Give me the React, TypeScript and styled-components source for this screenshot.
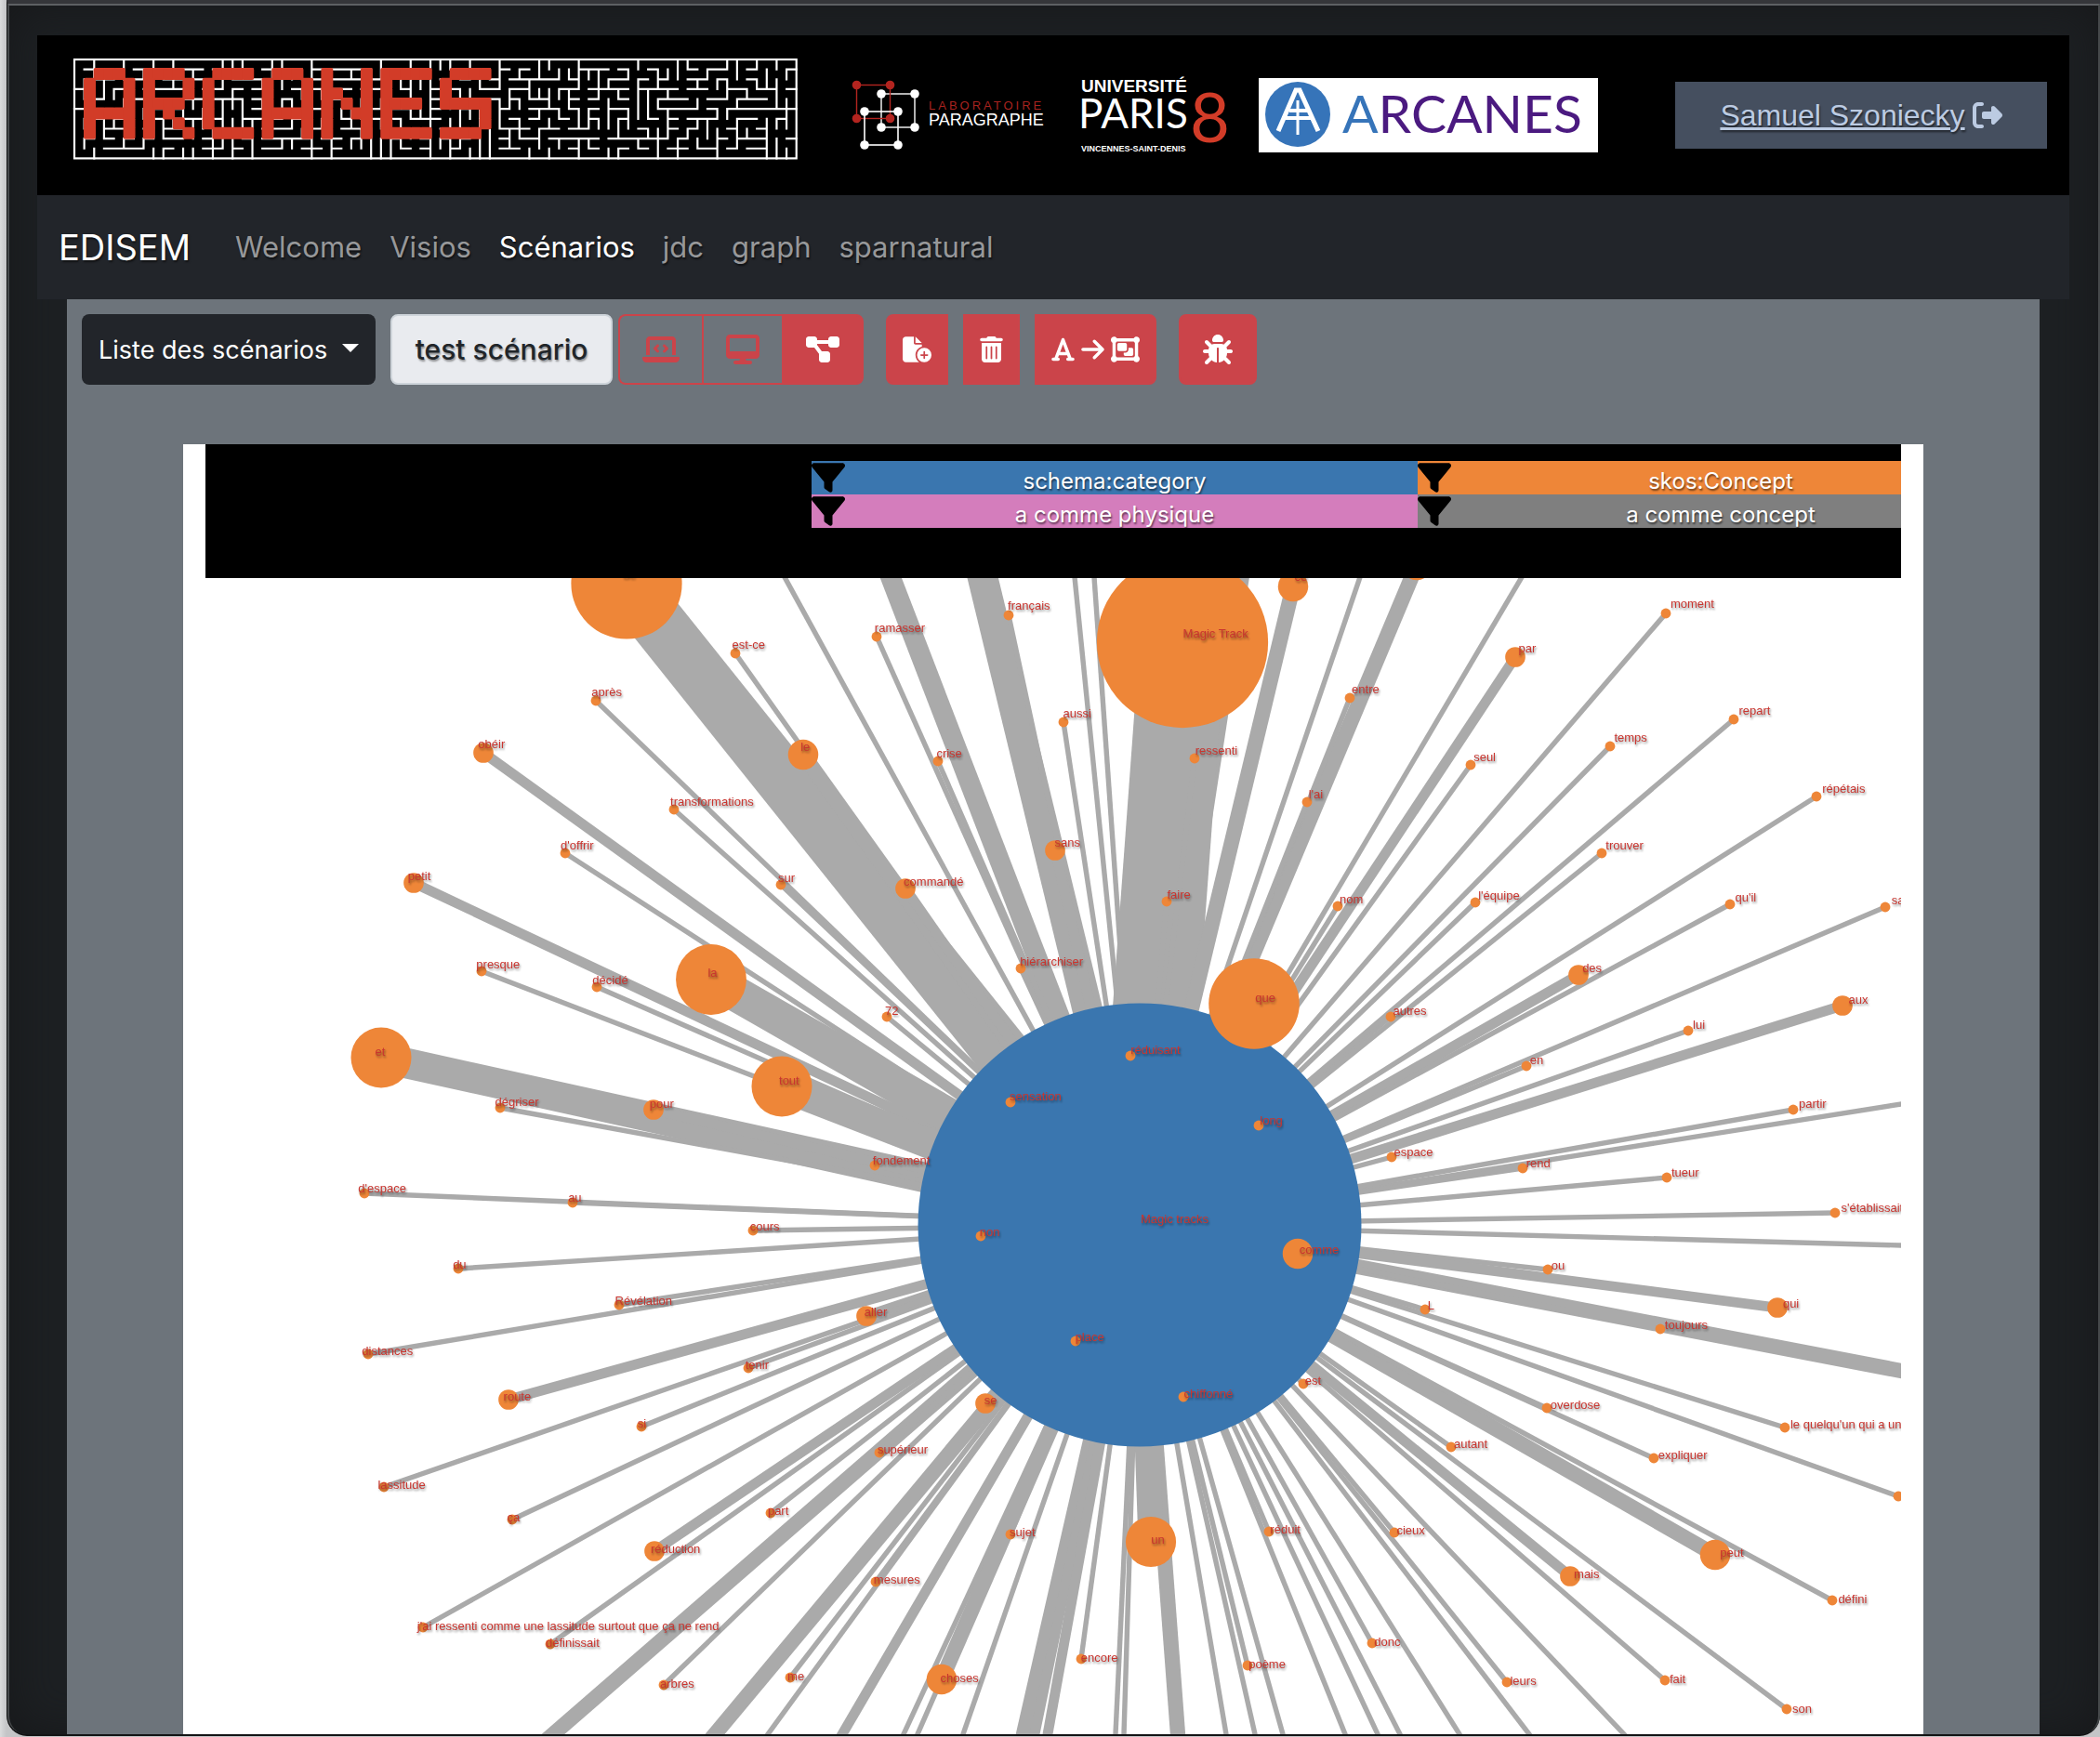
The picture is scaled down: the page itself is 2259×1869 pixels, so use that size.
import React from "react";
import styled, { createGlobalStyle, css } from "styled-components";
import {
  FaArrowRight,
  FaBug,
  FaDesktop,
  FaDiagramProject,
  FaFileCirclePlus,
  FaFilter,
  FaFont,
  FaLaptopCode,
  FaObjectGroup,
  FaRightFromBracket,
  FaTrashCan,
} from "react-icons/fa6";

const color = {
  danger: "#cb444a",
  dark: "#22252a",
  body: "#6d747b",
  blue: "#3a76af",
  orange: "#ee8638",
  pink: "#d47dbc",
  grey: "#7f7f7f",
  link: "#aaaaaa",
  label: "#c9352f",
};

const uiFont = `Inter, "Liberation Sans", sans-serif`;
const textShadow = "1px 2px 2px rgba(0, 0, 0, 0.55)";

const GlobalStyle = createGlobalStyle`
  *, *::before, *::after { box-sizing: border-box; }
  body {
    margin: 0;
    background: linear-gradient(90deg, #dadbdc, #c4c5c7 7px);
    font-family: ${uiFont};
  }
`;

/* ---------- window frame ---------- */

const WindowFrame = styled.div`
  margin-left: 7px;
  background: #191a1c;
  border: 1px solid #131415;
  border-top: 4px solid #35363a;
  border-right: 0;
  border-bottom-width: 2px;
  border-radius: 0 0 22px 22px;
  overflow: hidden;
`;

const WindowBody = styled.div`
  padding: 32px 31px 0 30px;
  border: 2px solid #46494b;
  border-top-color: #5d6063;
  border-bottom: 0;
  border-radius: 0 0 20px 20px;
  background: #1d2023;
  box-shadow: inset 0 0 50px #17181a;
`;

/* ---------- banner ---------- */

const Banner = styled.header`
  display: flex;
  align-items: center;
  height: 172px;
  padding: 0 24px 0 38px;
  background: #000;
`;

const Logo = styled.svg<{ $gap?: number }>`
  display: block;
  flex: none;
  margin-left: ${(p) => p.$gap ?? 0}px;
  overflow: visible;
`;

const MazeSvg = styled(Logo)`
  align-self: flex-start;
  margin-top: 24px;
`;

const UserBox = styled.div`
  display: flex;
  align-items: center;
  justify-content: center;
  gap: 8px;
  width: 400px;
  height: 72px;
  margin-left: auto;
  background: #454f5f;
  color: #bccbe2;
  font-family: "Liberation Sans", Arial, sans-serif;
  font-size: 32px;
  text-shadow: ${textShadow};
`;

const UserLink = styled.a`
  color: inherit;
`;

const LogoutButton = styled.button`
  display: flex;
  padding: 0;
  border: 0;
  background: none;
  color: inherit;
`;

/* ---------- navigation ---------- */

const Nav = styled.nav`
  display: flex;
  align-items: center;
  height: 112px;
  padding: 0 23px;
  background: ${color.dark};
`;

const Brand = styled.a`
  margin-right: 33px;
  color: #fff;
  font-size: 38px;
  line-height: 48px;
  text-decoration: none;
  text-shadow: ${textShadow};
`;

const NavList = styled.ul`
  display: flex;
  margin: 0;
  padding: 0;
  list-style: none;
`;

const NavLink = styled.a<{ $active?: boolean }>`
  display: block;
  padding: 0 15px;
  color: ${(p) => (p.$active ? "#fff" : "#97989a")};
  font-size: 31px;
  line-height: 48px;
  text-decoration: none;
  text-shadow: ${textShadow};
`;

/* ---------- toolbar ---------- */

const Main = styled.main`
  margin: 0 32px;
  background: ${color.body};
`;

const Toolbar = styled.div`
  display: flex;
  padding: 16px 16px 64px;
`;

const SelectBox = styled.div`
  position: relative;

  &::after {
    content: "";
    position: absolute;
    top: 32px;
    right: 18px;
    border: 9px solid transparent;
    border-top-color: #fff;
    border-bottom: 0;
    pointer-events: none;
  }
`;

const ScenarioSelect = styled.select`
  width: 316px;
  height: 76px;
  padding: 0 18px;
  appearance: none;
  border: 0;
  border-radius: 8px;
  background: ${color.dark};
  color: #fff;
  font-family: ${uiFont};
  font-size: 27px;
`;

const ScenarioName = styled.input`
  width: 239px;
  height: 76px;
  margin: 0 6px 0 16px;
  padding: 0;
  border: 2px solid #ced4da;
  border-radius: 8px;
  background: #e9ebef;
  color: #212529;
  font-family: ${uiFont};
  font-size: 30px;
  font-weight: 500;
  text-align: center;
  text-shadow: 1px 2px 2px rgba(0, 0, 0, 0.4);
`;

const ButtonGroup = styled.div<{ $gap: number; $left: number }>`
  display: flex;
  gap: ${(p) => p.$gap}px;
  margin-left: ${(p) => p.$left}px;
`;

const ToolButton = styled.button<{ $outline?: boolean; $pad: number }>`
  display: flex;
  align-items: center;
  justify-content: center;
  gap: 7px;
  height: 76px;
  padding: 0 ${(p) => p.$pad}px;
  border: 2px solid ${color.danger};
  background: ${color.danger};
  color: #fff;

  ${(p) =>
    p.$outline &&
    css`
      border-right: 0;
      background: transparent;
      color: ${color.danger};
    `}

  &:first-child {
    border-top-left-radius: 8px;
    border-bottom-left-radius: 8px;
  }
  &:last-child {
    border-top-right-radius: 8px;
    border-bottom-right-radius: 8px;
  }
`;

/* ---------- graph panel ---------- */

const Panel = styled.section`
  margin: 0 125px;
  padding: 0 24px;
  background: #fff;
`;

const Legend = styled.ul`
  display: grid;
  grid-template-columns: repeat(3, 652px);
  grid-auto-rows: 36px;
  height: 144px;
  margin: 0;
  padding: 18px 0;
  overflow: hidden;
  list-style: none;
  background: #000;
`;

const LegendItem = styled.li<{ $bg: string; $first?: boolean }>`
  display: grid;
  grid-template-columns: 36px 1fr 36px;
  grid-column-start: ${(p) => (p.$first ? 2 : "auto")};
  background: ${(p) => p.$bg};
  color: #fff;
  font-size: 24px;
  line-height: 44px;
  text-align: center;
  text-shadow: ${textShadow};
`;

const FilterButton = styled.button`
  display: flex;
  height: 36px;
  padding: 0;
  border: 0;
  background: none;
  color: #000;
`;

const GraphSvg = styled.svg`
  display: block;
  width: 100%;
  height: auto;
`;

const Labels = styled.g`
  fill: ${color.label};
  font-family: "Liberation Sans", Arial, sans-serif;
  font-size: 13px;
  filter: drop-shadow(1px 2px 1px rgba(0, 0, 0, 0.45));
`;

/* ---------- maze logo ---------- */

const COLS = 73;
const ROWS = 10;
const CELL = 10.64;

/** Carves a perfect maze with a seeded random walk and returns its remaining walls. */
function buildMaze(): string {
  let seed = 20;
  const rand = () => {
    seed = (seed * 1103515245 + 12345) % 2147483648;
    return seed / 2147483648;
  };
  const parent = Array.from({ length: COLS * ROWS }, (_, i) => i);
  const find = (i: number): number => (parent[i] === i ? i : (parent[i] = find(parent[i])));
  const walls: { a: number; b: number; d: string }[] = [];
  for (let y = 0; y < ROWS; y++) {
    for (let x = 0; x < COLS; x++) {
      const i = y * COLS + x;
      if (x + 1 < COLS) walls.push({ a: i, b: i + 1, d: `M${(x + 1) * CELL} ${y * CELL}v${CELL}` });
      if (y + 1 < ROWS) walls.push({ a: i, b: i + COLS, d: `M${x * CELL} ${(y + 1) * CELL}h${CELL}` });
    }
  }
  for (let i = walls.length - 1; i > 0; i--) {
    const j = Math.floor(rand() * (i + 1));
    [walls[i], walls[j]] = [walls[j], walls[i]];
  }
  return walls
    .filter(({ a, b }) => {
      const ra = find(a);
      const rb = find(b);
      if (ra === rb) return true;
      parent[ra] = rb;
      return false;
    })
    .map((w) => w.d)
    .join("");
}

const mazePath = buildMaze();

const tiles: string[][] = [
  [".###.", "#...#", "#...#", "#...#", "#####", "#...#", "#...#"],
  ["####.", "#...#", "#...#", "####.", "#.#..", "#..#.", "#...#"],
  [".####", "#....", "#....", "#....", "#....", "#....", ".####"],
  [".###.", "#...#", "#...#", "#...#", "#####", "#...#", "#...#"],
  ["#...#", "#...#", "##..#", "#.#.#", "#..##", "#...#", "#...#"],
  ["#####", "#....", "#....", "####.", "#....", "#....", "#####"],
  [".####", "#....", "#....", "#####", "....#", "....#", "####."],
];

const MazeLogo = () => (
  <MazeSvg width={780} height={110} viewBox="-2 -2 780 110" role="img" aria-label="ARCANES">
    <path d={mazePath} stroke="#fff" strokeWidth={2.2} strokeLinecap="square" fill="none" />
    <rect width={COLS * CELL} height={ROWS * CELL} fill="none" stroke="#fff" strokeWidth={2.2} />
    <g fill="#d23c28">
      {tiles.map((rows, n) =>
        rows.map((row, y) =>
          [...row].map((c, x) =>
            c === "#" ? (
              <rect
                key={`${n}-${x}-${y}`}
                x={10 + (n * 6 + x) * CELL}
                y={9 + y * CELL}
                width={13}
                height={13}
                rx={2}
              />
            ) : null,
          ),
        ),
      )}
    </g>
  </MazeSvg>
);

/* ---------- partner logos ---------- */

const Square = ({ x, y, stroke, width }: { x: number; y: number; stroke: string; width: number }) => (
  <g stroke={stroke} fill={stroke}>
    <rect x={x} y={y} width={36} height={36} fill="none" strokeWidth={width} />
    {[0, 36].map((dx) =>
      [0, 36].map((dy) => <circle key={`${dx}${dy}`} cx={x + dx} cy={y + dy} r={4.8} stroke="none" />),
    )}
  </g>
);

const ParagrapheLogo = () => (
  <Logo $gap={58} width={212} height={80} viewBox="0 0 212 80" role="img" aria-label="Laboratoire Paragraphe">
    <Square x={32} y={17} stroke="#fff" width={1.4} />
    <Square x={5.5} y={7.5} stroke="#b3241f" width={1.4} />
    <Square x={14} y={36} stroke="#fff" width={1.6} />
    <g fontFamily="Liberation Sans, Arial, sans-serif">
      <text x={83} y={34} fontSize={13} fill="#a8231f" letterSpacing={3}>
        LABORATOIRE
      </text>
      <text x={83} y={51} fontSize={18} fill="#fff">
        PARAGRAPHE
      </text>
    </g>
  </Logo>
);

const ParisLogo = () => (
  <Logo $gap={32} width={166} height={84} viewBox="0 0 166 84" role="img" aria-label="Université Paris 8">
    <g fontFamily="Liberation Sans, Arial, sans-serif" fill="#fff" fontWeight={700}>
      <text x={3} y={17} fontSize={19}>
        UNIVERSITÉ
      </text>
      <text x={0} y={56} fontSize={44} fontWeight={400} fontFamily="Lato, sans-serif">
        PARIS
      </text>
      <text x={3} y={81} fontSize={9}>
        VINCENNES-SAINT-DENIS
      </text>
    </g>
    <text x={120} y={71} fontSize={74} fill="#d23c28" fontFamily="Lato, sans-serif">
      8
    </text>
  </Logo>
);

const ArcanesLogo = () => (
  <Logo $gap={28} width={365} height={80} viewBox="0 0 365 80" role="img" aria-label="Arcanes">
    <rect width={365} height={80} fill="#fff" />
    <circle cx={42} cy={39} r={35} fill="#3674b9" />
    <g stroke="#fff" fill="none">
      <path d="M21 57 40 13h4l20 44" strokeWidth={5} />
      <path d="M28 43h28M33 35h19" strokeWidth={4} />
      <path d="M42 24v37" strokeWidth={3} />
    </g>
    <text x={90} y={59} fontSize={57} fill="#4b1a80" fontFamily="Lato, sans-serif">
      <tspan fill="#3674b9">A</tspan>RCANES
    </text>
  </Logo>
);

/* ---------- graph data ---------- */

const HUB = { x: 1226, y: 1319, weight: 44 };
const UNIT = 5.42;

type GraphNode = [label: string, x: number, y: number, weight?: number];

const nodes: GraphNode[] = [
  ["de", 674, 629, 11],
  ["est-ce", 791, 704],
  ["ramasser", 943, 686],
  ["après", 641, 755],
  ["obéir", 520, 811, 2],
  ["le", 864, 813, 3],
  ["crise", 1009, 820],
  ["transformations", 725, 872],
  ["d'offrir", 608, 919],
  ["petit", 445, 951, 2],
  ["sur", 840, 953],
  ["commandé", 974, 957, 2],
  ["presque", 518, 1046],
  ["décidé", 642, 1063],
  ["la", 765, 1055, 7],
  ["72", 954, 1095],
  ["et", 410, 1139, 6],
  ["tout", 841, 1170, 6],
  ["dégriser", 538, 1193],
  ["pour", 703, 1195, 2],
  ["français", 1085, 663],
  ["Magic Track", 1272, 692, 17],
  ["ce", 1391, 632, 3],
  ["", 1524, 609, 3],
  ["aussi", 1144, 778],
  ["ressenti", 1285, 817],
  ["entre", 1452, 752],
  ["par", 1630, 708, 2],
  ["seul", 1582, 824],
  ["l'ai", 1406, 864],
  ["sans", 1135, 916, 2],
  ["faire", 1255, 971],
  ["nom", 1439, 976],
  ["l'équipe", 1587, 972],
  ["hiérarchiser", 1098, 1043],
  ["que", 1349, 1081, 9],
  ["autres", 1496, 1095],
  ["des", 1698, 1050, 2],
  ["réduisant", 1216, 1137],
  ["sensation", 1087, 1187],
  ["long", 1354, 1212],
  ["en", 1642, 1148],
  ["moment", 1792, 661],
  ["repart", 1865, 775],
  ["temps", 1732, 804],
  ["répétais", 1954, 858],
  ["trouver", 1723, 919],
  ["qu'il", 1861, 974],
  ["sa", 2028, 977],
  ["aux", 1982, 1083, 2],
  ["lui", 1816, 1110],
  ["partir", 1929, 1195],
  ["tueur", 1793, 1268],
  ["s'établissait", 1974, 1306],
  ["ou", 1665, 1367],
  ["qui", 1912, 1408, 2],
  ["toujours", 1786, 1431],
  ["le quelqu'un qui a un", 1920, 1537],
  ["overdose", 1664, 1516],
  ["expliquer", 1779, 1570],
  ["", 2042, 1611],
  ["peut", 1845, 1674, 3],
  ["mais", 1689, 1697, 2],
  ["défini", 1971, 1723],
  ["fait", 1791, 1809],
  ["son", 1922, 1840],
  ["espace", 1497, 1246],
  ["rend", 1638, 1258],
  ["non", 1055, 1331],
  ["comme", 1396, 1350, 3],
  ["L", 1533, 1410],
  ["place", 1157, 1444],
  ["chiffonné", 1273, 1504],
  ["est", 1402, 1490],
  ["se", 1060, 1511, 2],
  ["autant", 1561, 1558],
  ["cieux", 1500, 1650],
  ["réduit", 1365, 1649],
  ["sujet", 1087, 1652],
  ["un", 1238, 1660, 5],
  ["donc", 1476, 1769],
  ["encore", 1163, 1786],
  ["poème", 1342, 1793],
  ["leurs", 1621, 1811],
  ["choses", 1013, 1808, 3],
  ["fondement", 941, 1255],
  ["d'espace", 392, 1285],
  ["au", 616, 1295],
  ["cours", 810, 1325],
  ["du", 493, 1366],
  ["Révélation", 666, 1405],
  ["aller", 932, 1417, 2],
  ["distances", 396, 1458],
  ["tenir", 805, 1473],
  ["route", 547, 1507, 2],
  ["si", 690, 1536],
  ["supérieur", 946, 1564],
  ["lassitude", 413, 1601],
  ["ça", 551, 1636],
  ["part", 829, 1629],
  ["réduction", 704, 1670, 2],
  ["mesures", 942, 1703],
  ["j'ai ressenti comme une lassitude surtout que ça ne rend", 455, 1752],
  ["définissait", 592, 1770],
  ["arbres", 714, 1814],
  ["me", 850, 1806],
];

/* Links whose far node is outside the visible area: the point where each one leaves it. */
const outgoing: [x: number, y: number, weight?: number][] = [
  [844, 622],
  [958, 622, 4],
  [1057, 622, 6],
  [1156, 622],
  [1177, 622],
  [1333, 622, 4],
  [1463, 622],
  [1637, 622],
  [2045, 1189],
  [2045, 1341],
  [2045, 1476, 3],
  [1747, 1867],
  [595, 1867, 3],
  [769, 1867, 3],
  [826, 1867],
  [906, 1867, 2],
  [972, 1867],
  [987, 1867],
  [1036, 1867],
  [1101, 1867, 3],
  [1113, 1867, 2],
  [1127, 1867, 2],
  [1200, 1867],
  [1209, 1867],
  [1267, 1867, 3],
  [1319, 1867],
  [1350, 1867],
  [1380, 1867],
  [1447, 1867],
  [1482, 1867],
  [1506, 1867],
  [1570, 1867],
  [1645, 1867],
];

/* Labels live on a slightly wider scale than the nodes. */
const labelX = (x: number) => x + (x - 1200) * 0.0083;
const labelY = (y: number) => y - 1 + (y - 1260) * 0.0078;

const Graph = () => (
  <GraphSvg viewBox="221 623 1824 1244" role="img" aria-label="Graphe du scénario">
    <g stroke={color.link}>
      {outgoing.map(([x, y, w = 1], i) => (
        <line
          key={i}
          x1={HUB.x}
          y1={HUB.y}
          x2={HUB.x + (x - HUB.x) * 1.1}
          y2={HUB.y + (y - HUB.y) * 1.1}
          strokeWidth={w * UNIT}
        />
      ))}
      {nodes.map(([, x, y, w = 1], i) => (
        <line key={i} x1={HUB.x} y1={HUB.y} x2={x} y2={y} strokeWidth={w * UNIT} />
      ))}
    </g>
    <circle cx={HUB.x} cy={HUB.y} r={HUB.weight * UNIT} fill={color.blue} />
    <g fill={color.orange}>
      {nodes.map(([, x, y, w = 1], i) => (
        <circle key={i} cx={x} cy={y} r={w * UNIT} />
      ))}
    </g>
    <Labels>
      <text x={1227} y={1317}>
        Magic tracks
      </text>
      {nodes.map(([label, x, y], i) =>
        label ? (
          <text key={i} x={labelX(x)} y={labelY(y)}>
            {label}
          </text>
        ) : null,
      )}
    </Labels>
  </GraphSvg>
);

/* ---------- page ---------- */

const links = ["Welcome", "Visios", "Scénarios", "jdc", "graph", "sparnatural"];

const legend = [
  { name: "schema:category", bg: color.blue },
  { name: "skos:Concept", bg: color.orange },
  { name: "a comme physique", bg: color.pink },
  { name: "a comme concept", bg: color.grey },
];

export default function App() {
  return (
    <>
      <GlobalStyle />
      <WindowFrame>
        <WindowBody>
          <Banner>
            <MazeLogo />
            <ParagrapheLogo />
            <ParisLogo />
            <ArcanesLogo />
            <UserBox>
              <UserLink href="#user">Samuel Szoniecky</UserLink>
              <LogoutButton aria-label="Se déconnecter">
                <FaRightFromBracket size={32} />
              </LogoutButton>
            </UserBox>
          </Banner>
          <Nav>
            <Brand href="#home">EDISEM</Brand>
            <NavList>
              {links.map((name) => (
                <li key={name}>
                  <NavLink href={`#${name}`} $active={name === "Scénarios"}>
                    {name}
                  </NavLink>
                </li>
              ))}
            </NavList>
          </Nav>
          <Main>
            <Toolbar>
              <SelectBox>
                <ScenarioSelect aria-label="Liste des scénarios">
                  <option>Liste des scénarios</option>
                </ScenarioSelect>
              </SelectBox>
              <ScenarioName aria-label="Nom du scénario" readOnly value="test scénario" />
              <ButtonGroup $gap={0} $left={0}>
                <ToolButton $outline $pad={24} aria-label="Code">
                  <FaLaptopCode size={32} style={{ width: 40 }} />
                </ToolButton>
                <ToolButton $outline $pad={24} aria-label="Écran">
                  <FaDesktop size={32} style={{ width: 36 }} />
                </ToolButton>
                <ToolButton $pad={24} aria-label="Diagramme">
                  <FaDiagramProject size={32} style={{ width: 36 }} />
                </ToolButton>
              </ButtonGroup>
              <ButtonGroup $gap={16} $left={24}>
                <ToolButton $pad={16} aria-label="Ajouter">
                  <FaFileCirclePlus size={28} style={{ width: 31 }} />
                </ToolButton>
                <ToolButton $pad={16} aria-label="Supprimer">
                  <FaTrashCan size={28} style={{ width: 25 }} />
                </ToolButton>
                <ToolButton $pad={16} aria-label="Convertir le texte en groupe">
                  <FaFont size={28} style={{ width: 25 }} />
                  <FaArrowRight size={28} style={{ width: 25 }} />
                  <FaObjectGroup size={28} style={{ width: 31 }} />
                </ToolButton>
              </ButtonGroup>
              <ButtonGroup $gap={0} $left={24}>
                <ToolButton $pad={24} aria-label="Déboguer">
                  <FaBug size={32} />
                </ToolButton>
              </ButtonGroup>
            </Toolbar>
            <Panel>
              <Legend>
                {legend.map(({ name, bg }, i) => (
                  <LegendItem key={name} $bg={bg} $first={i % 2 === 0}>
                    <FilterButton aria-label={`Filtrer ${name}`}>
                      <FaFilter size={36} />
                    </FilterButton>
                    {name}
                  </LegendItem>
                ))}
              </Legend>
              <Graph />
            </Panel>
          </Main>
        </WindowBody>
      </WindowFrame>
    </>
  );
}
